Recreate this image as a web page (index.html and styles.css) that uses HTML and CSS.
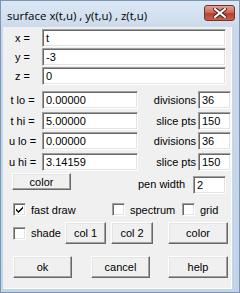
FILE: index.html
```html
<!DOCTYPE html>
<html>
<head>
<meta charset="utf-8">
<link rel="stylesheet" href="styles.css">
</head>
<body>
<div class="window">
  <div class="titlebar">
    <span class="title">surface x(t,u) , y(t,u) , z(t,u)</span>
    <div class="close">
      <svg width="14" height="10" viewBox="0 0 14 10">
        <path d="M2 1 L12 9 M12 1 L2 9" stroke="#4a2020" stroke-width="4" stroke-linecap="square"/>
        <path d="M2 1 L12 9 M12 1 L2 9" stroke="#ffffff" stroke-width="2" stroke-linecap="square"/>
      </svg>
    </div>
  </div>
  <div class="client">
    <div class="row r-x"><span class="lbl">x =</span><div class="field wide">t</div></div>
    <div class="row r-y"><span class="lbl">y =</span><div class="field wide">-3</div></div>
    <div class="row r-z"><span class="lbl">z =</span><div class="field wide">0</div></div>

    <div class="row r-tlo"><span class="lbl">t lo =</span><div class="field mid">0.00000</div><span class="rlbl">divisions</span><div class="field small">36</div></div>
    <div class="row r-thi"><span class="lbl">t hi =</span><div class="field mid">5.00000</div><span class="rlbl">slice pts</span><div class="field small">150</div></div>
    <div class="row r-ulo"><span class="lbl">u lo =</span><div class="field mid">0.00000</div><span class="rlbl">divisions</span><div class="field small">36</div></div>
    <div class="row r-uhi"><span class="lbl">u hi =</span><div class="field mid">3.14159</div><span class="rlbl">slice pts</span><div class="field small">150</div></div>

    <div class="row r-color">
      <div class="btn b-color">color</div>
      <span class="pen-lbl">pen width</span>
      <div class="field small pen">2</div>
    </div>

    <div class="row r-checks">
      <span class="check c-fast"><svg width="9" height="9" viewBox="0 0 9 9"><path d="M1 3.5 L3.5 6 L8 1.5 L8 3.5 L3.5 8 L1 5.5 Z" fill="#000"/></svg></span><span class="ctext fast">fast draw</span>
      <span class="check"></span><span class="ctext spec">spectrum</span>
      <span class="check"></span><span class="ctext">grid</span>
    </div>

    <div class="row r-shade">
      <span class="check c-shade"></span><span class="ctext shade">shade</span>
      <div class="btn b-col1">col 1</div>
      <div class="btn b-col2">col 2</div>
      <div class="btn b-color2">color</div>
    </div>

    <div class="row r-bottom">
      <div class="btn big b-ok">ok</div>
      <div class="btn big b-cancel">cancel</div>
      <div class="btn big b-help">help</div>
    </div>
  </div>
</div>
</body>
</html>
```

FILE: styles.css
```css
* { box-sizing: border-box; }
html, body { margin: 0; padding: 0; }
body {
  width: 240px;
  height: 293px;
  overflow: hidden;
  font-family: "Liberation Sans", Arial, sans-serif;
  font-size: 11px;
  color: #000;
  background: #fff;
}
.window {
  width: 240px;
  height: 293px;
  border: 1px solid #7a96b4;
  background: linear-gradient(#dce7f4, #c9d8ea 30px, #c4d4e8);
  display: flex;
  flex-direction: column;
}
.titlebar {
  height: 26px;
  display: flex;
  align-items: center;
  padding-left: 6px;
  position: relative;
}
.title {
  font-family: "Open Sans", "Noto Sans", sans-serif;
  font-size: 11.5px;
  color: #000;
  margin-top: 2px;
  white-space: nowrap;
}
.close {
  position: absolute;
  left: 203px;
  top: 4px;
  width: 31px;
  height: 16px;
  border: 1px solid #6e3434;
  border-radius: 3px;
  background: linear-gradient(#e2a090, #cf6a58 45%, #b8402e 55%, #c9604c);
  display: flex;
  align-items: center;
  justify-content: center;
}
.client {
  flex: 1;
  margin: 0 7px 3px 2px;
  background: #f0f0f0;
  border-right: 1px solid #ffffff;
  border-bottom: 1px solid #ffffff;
  padding-top: 2px;
  display: flex;
  flex-direction: column;
}
.row { display: flex; align-items: center; white-space: nowrap; }
.row > * { flex-shrink: 0; }
.lbl { width: 39px; text-align: center; }
.field {
  height: 18px;
  background: #fff;
  border: 1px solid;
  border-color: #a0a0a0 #ffffff #ffffff #a0a0a0;
  box-shadow: inset 1px 1px #696969, inset -1px -1px #e3e3e3;
  padding-left: 3px;
  line-height: 16px;
  white-space: nowrap;
}
.field.wide { width: 184px; }
.field.mid { width: 96px; }
.field.small { width: 33px; }
.rlbl { flex: 1 1 auto; text-align: right; padding-right: 2px; }

.r-y, .r-z { margin-top: 1px; }
.r-tlo { margin-top: 6px; }
.r-thi { margin-top: 3px; }
.r-ulo { margin-top: 2px; }
.r-uhi { margin-top: 3px; }

.btn {
  background: #f0f0f0;
  border: 1px solid;
  border-color: #ffffff #696969 #696969 #ffffff;
  box-shadow: inset -1px -1px #a0a0a0, inset 1px 1px #e3e3e3;
  display: flex;
  align-items: center;
  justify-content: center;
  height: 22px;
}
.r-color { margin-top: 2px; align-items: flex-start; height: 22px; }
.b-color { margin-left: 9px; width: 59px; height: 17px; }
.pen-lbl { margin-left: 67px; margin-top: 5px; width: 43px; }
.field.pen { margin-left: 12px; margin-top: 3px; }

.check {
  width: 13px;
  height: 13px;
  background: #fff;
  border: 1px solid;
  border-color: #a0a0a0 #ffffff #ffffff #a0a0a0;
  box-shadow: inset 1px 1px #696969, inset -1px -1px #e3e3e3;
  display: flex;
  align-items: center;
  justify-content: center;
}
.r-checks { margin-top: 8px; height: 13px; }
.c-fast { margin-left: 10px; }
.ctext { margin-left: 5px; }
.ctext.fast { width: 81px; }
.ctext.spec { width: 52px; }

.r-shade { margin-top: 6px; }
.c-shade { margin-left: 10px; }
.ctext.shade { width: 29px; }
.b-col1 { margin-left: 5px; width: 41px; }
.b-col2 { margin-left: 5px; width: 42px; }
.b-color2 { margin-left: 15px; width: 60px; }

.r-bottom { margin-top: 12px; }
.big { width: 59px; }
.b-ok { margin-left: 10px; }
.b-cancel { margin-left: 19px; }
.b-help { margin-left: 18px; width: 60px; }
```
